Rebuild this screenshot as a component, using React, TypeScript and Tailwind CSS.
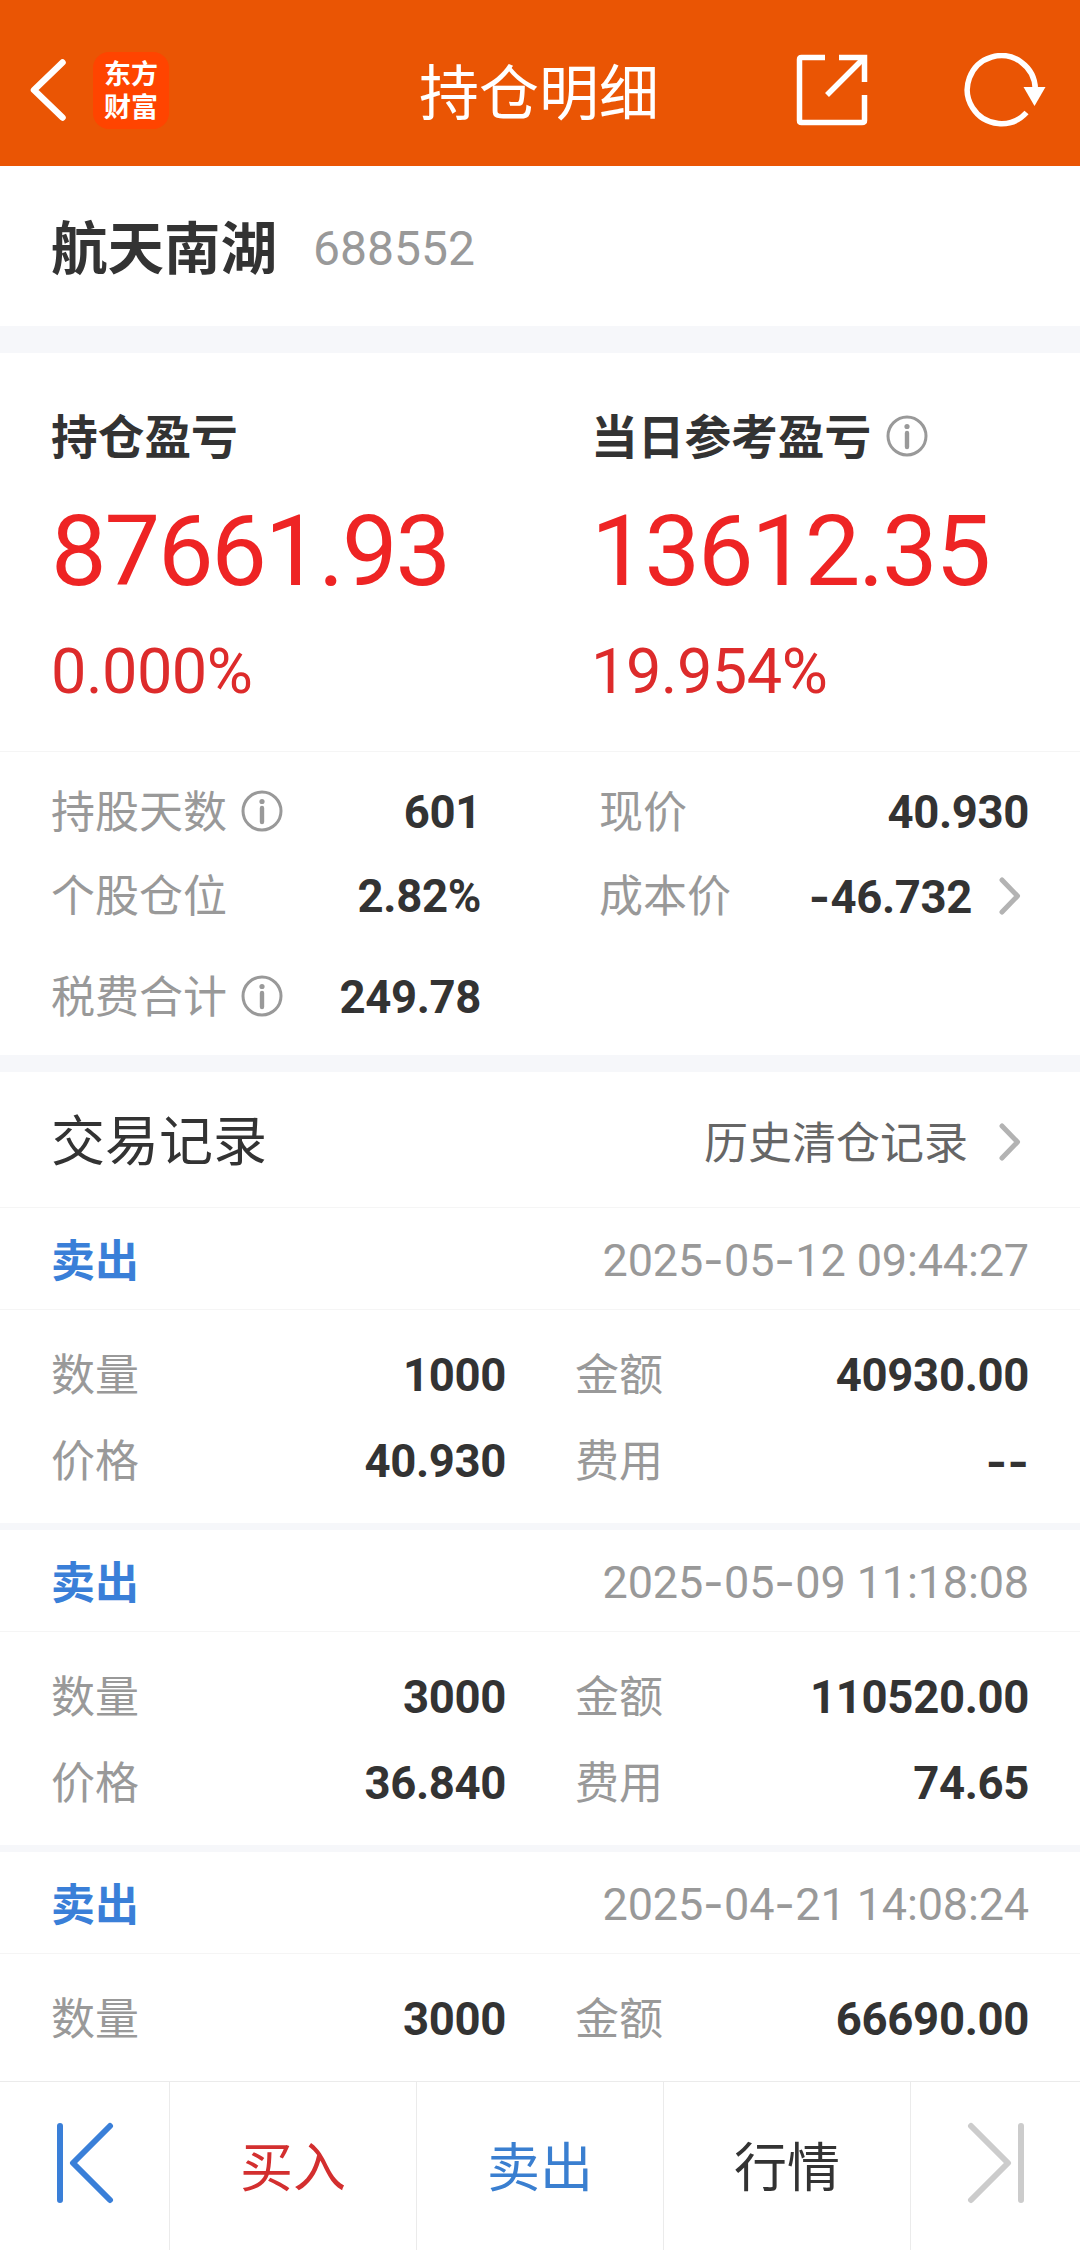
import React from 'react';

interface TradeRecord {
  time: string;
  count: string;
  amount: string;
  price?: string;
  fee?: string;
}

const records: TradeRecord[] = [
  { time: '2025-05-12 09:44:27', count: '1000', amount: '40930.00', price: '40.930', fee: '--' },
  { time: '2025-05-09 11:18:08', count: '3000', amount: '110520.00', price: '36.840', fee: '74.65' },
  { time: '2025-04-21 14:08:24', count: '3000', amount: '66690.00' },
];

// Roboto's hyphen is too short next to its digits, so hyphens are set in Inter
function Num({ text }: { text: string }) {
  return (
    <>
      {text.split(/(-)/).map((part, idx) =>
        part === '-' ? <span key={idx} className="font-['Inter'] tracking-[0.300px]">-</span> : part
      )}
    </>
  );
}

function InfoIcon() {
  return (
    <svg width="42" height="42" viewBox="0 0 42 42" fill="none" stroke="#999" className="shrink-0">
      <circle cx="21" cy="21" r="19" strokeWidth="3" />
      <circle cx="21" cy="11.5" r="2.6" fill="#999" stroke="none" />
      <path d="M21 18v14" strokeWidth="4.4" strokeLinecap="round" />
    </svg>
  );
}

function Chevron() {
  return (
    <svg width="22" height="38" viewBox="0 0 22 38" fill="none" stroke="#b3b3b3" strokeWidth="5" strokeLinecap="round" strokeLinejoin="round" className="shrink-0">
      <path d="M3 3l15.5 16L3 35" />
    </svg>
  );
}

function Header() {
  return (
    <header className="flex h-[166px] shrink-0 items-center bg-[#ea5504] pt-[14px] text-white">
      <div className="flex w-[399px] items-center">
        <svg width="38" height="64" viewBox="0 0 38 64" fill="none" stroke="currentColor" strokeWidth="6.5" strokeLinecap="round" strokeLinejoin="round" className="ml-[29px]">
          <path d="M33.5 4.500L5 32l28.500 27.500" />
        </svg>
        <div className="ml-[26px] h-[77px] w-[76px] rounded-[16px] bg-[#ff4400] pt-[4px] text-center font-['Noto_Sans_CJK_SC'] text-[27px] leading-[33px] font-bold">
          东方<br />财富
        </div>
      </div>
      <h1 className="w-[280px] pt-[10px] text-center text-[60px] leading-[60px]">持仓明细</h1>
      <div className="flex flex-1 items-center">
        <svg width="72" height="72" viewBox="0 0 72 72" fill="none" stroke="currentColor" strokeWidth="5.5" strokeLinejoin="round" className="ml-[117px]">
          <path d="M29 3.500H5.500Q3.500 3.500 3.500 5.500V66.500Q3.500 68.500 5.500 68.500H66Q68.500 68.500 68.500 66.500V41" />
          <path d="M43 3.500H68.500V28" strokeLinejoin="miter" />
          <path d="M67 5L31 41" />
        </svg>
        <svg width="82" height="74" viewBox="0 0 82 74" fill="none" stroke="currentColor" strokeWidth="5.5" className="ml-[96px]">
          <path d="M71.300 36A34 34 0 1 0 62.500 59.500" />
          <path d="M59.500 34H81.500L70.500 53z" fill="currentColor" stroke="none" />
        </svg>
      </div>
    </header>
  );
}

function Profit({ label, value, percent, info }: { label: string; value: string; percent: string; info?: boolean }) {
  return (
    <div className="pl-[51px]">
      <div className="flex h-[48px] items-center text-[46.700px] leading-none font-bold text-[#333]">
        {label}
        {info && <span className="-mt-[4px] ml-[15px]"><InfoIcon /></span>}
      </div>
      <div className="mt-[39px] h-[100px] text-[99px] leading-[100px] tracking-[-2.200px] text-[#ee2424]">{value}</div>
      <div className="mt-[39px] h-[63px] text-[63px] leading-[63px] tracking-[-0.500px] text-[#dd2b2b]">{percent}</div>
    </div>
  );
}

function Field({ label, value, info, arrow }: { label: string; value: string; info?: boolean; arrow?: boolean }) {
  return (
    <div className="flex h-[44px] items-center text-[44px] leading-none">
      <span className="text-[#999]">{label}</span>
      {info && <span className="-mt-[4px] ml-[14px]"><InfoIcon /></span>}
      <span className="ml-auto text-[45.500px] font-bold tracking-[-0.350px] text-[#333]"><Num text={value} /></span>
      {arrow && <span className="-mt-[2px] mr-[8px] ml-[27px]"><Chevron /></span>}
    </div>
  );
}

function Record({ record }: { record: TradeRecord }) {
  return (
    <div className="border-b-[7px] border-[#f6f7fa]">
      <div className="flex h-[102px] items-center justify-between border-b border-[#f5f5f5] pt-[5px] pr-[51px] pl-[51px]">
        <span className="pt-[1px] text-[44px] leading-none font-bold text-[#3a7fd8]">卖出</span>
        <span className="-mt-[3px] text-[45px] leading-none tracking-[-0.150px] text-[#999]"><Num text={record.time} /></span>
      </div>
      <div className="grid grid-cols-[455px_454px] gap-x-[69px] gap-y-[42px] pt-[44px] pb-[39px] pl-[51px]">
        <Field label="数量" value={record.count} />
        <Field label="金额" value={record.amount} />
        {record.price && <Field label="价格" value={record.price} />}
        {record.fee && <Field label="费用" value={record.fee} />}
      </div>
    </div>
  );
}

export default function App() {
  return (
    <div className="flex h-[2250px] w-[1080px] flex-col overflow-hidden bg-white font-['Roboto','Noto_Sans_CJK_SC',sans-serif]">
      <Header />

      <main className="min-h-0 flex-1 overflow-hidden">
        <section className="flex h-[187px] items-center border-b-[27px] border-[#f6f7fa] pt-[7px] pl-[51px]">
          <span className="pt-[1px] text-[56.500px] leading-none font-bold text-[#333]">航天南湖</span>
          <span className="-mt-[2px] ml-[36px] text-[48px] leading-none text-[#999]">688552</span>
        </section>

        <section className="grid h-[399px] grid-cols-2 border-b border-[#f5f5f5] pt-[61px]">
          <Profit label="持仓盈亏" value="87661.93" percent="0.000%" />
          <Profit label="当日参考盈亏" value="13612.35" percent="19.954%" info />
        </section>

        <section className="grid h-[320px] grid-cols-[430px_430px] content-start gap-x-[118px] border-b-[17px] border-[#f6f7fa] pt-[39px] pl-[51px]">
          <Field label="持股天数" value="601" info />
          <Field label="现价" value="40.930" />
          <div className="mt-[40px]"><Field label="个股仓位" value="2.82%" /></div>
          <div className="mt-[40px]"><Field label="成本价" value="-46.732" arrow /></div>
          <div className="mt-[57px]"><Field label="税费合计" value="249.78" info /></div>
        </section>

        <section>
          <div className="flex h-[136px] items-center border-b border-[#f5f5f5] pt-[6px] pr-[59px] pl-[51px] leading-none">
            <span className="text-[54px] text-[#333]">交易记录</span>
            <span className="ml-auto pt-[2px] text-[44px] text-[#666]">历史清仓记录</span>
            <span className="-mt-[2px] ml-[31px]"><Chevron /></span>
          </div>
          {records.map((record) => (
            <Record key={record.time} record={record} />
          ))}
        </section>
      </main>

      <nav className="grid h-[169px] shrink-0 grid-cols-[170px_247px_247px_247px_169px] border-t border-[#ebebeb] text-[53px] leading-none">
        <div className="flex items-center justify-center border-r border-[#ebebeb] pb-[6px]">
          <svg width="58" height="82" viewBox="0 0 58 82" fill="none" stroke="#3a7fd8" strokeWidth="6" strokeLinecap="round" strokeLinejoin="round">
            <path d="M4 4v74M54 4L17 41l37 37" />
          </svg>
        </div>
        <div className="flex items-center justify-center border-r border-[#ebebeb] pt-[6px] text-[#d32f2f]">买入</div>
        <div className="flex items-center justify-center border-r border-[#ebebeb] pt-[6px] text-[#3a7fd0]">卖出</div>
        <div className="flex items-center justify-center border-r border-[#ebebeb] pt-[6px] text-[#333]">行情</div>
        <div className="flex items-center justify-center pb-[6px]">
          <svg width="58" height="82" viewBox="0 0 58 82" fill="none" stroke="#ccc" strokeWidth="6" strokeLinecap="round" strokeLinejoin="round">
            <path d="M54 4v74M4 4l37 37L4 78" />
          </svg>
        </div>
      </nav>
    </div>
  );
}
